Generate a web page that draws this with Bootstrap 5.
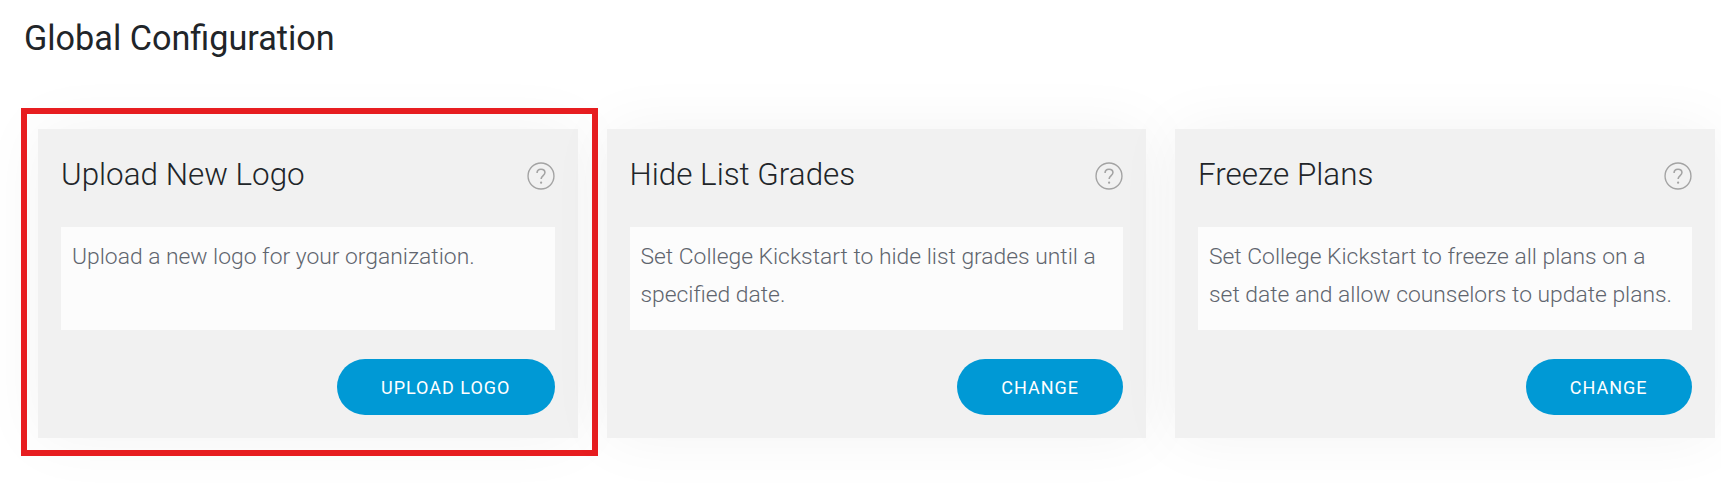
<!DOCTYPE html>
<html lang="en">
<head>
<meta charset="utf-8">
<title>Global Configuration</title>
<link href="https://cdn.jsdelivr.net/npm/bootstrap@5.3.0/dist/css/bootstrap.min.css" rel="stylesheet">
<style>
body { font-family: Roboto, "Liberation Sans", sans-serif; background: #fff; min-height: 484px; }
.cfg-page { padding: 18px 6px 46px 38px; }
.cfg-heading { font-family: Roboto, sans-serif; font-size: 34.2px; font-weight: 400; line-height: 40px; color: #212529; margin: 0 0 71px -14px; }
.cfg-cards { gap: 29px; }
.cfg-card { width: 539.5px; height: 309px; background: #f1f1f1; box-shadow: 0 0 60px rgba(0,0,0,.05); padding: 0 23px; position: relative; }
.cfg-head { height: 98px; padding-top: 28px; }
.cfg-title { font-size: 31.4px; font-weight: 300; line-height: 36px; color: #212529; margin: 0; }
.cfg-help { width: 28px; height: 28px; margin-top: 5px; }
.cfg-desc { height: 103px; background: #fcfcfc; padding: 10.5px 11px 0; font-size: 22.85px; font-weight: 300; line-height: 38px; color: #60656e; margin: 0; }
.cfg-foot { margin-top: 29px; }
.cfg-btn { height: 56px; border-radius: 28px; background: #0099d5; border: 0; color: #fff; font-size: 18px; font-weight: 400; letter-spacing: 1px; padding: 0 44px; text-transform: uppercase; }
.cfg-btn:hover { background: #0099d5; color: #fff; }
.cfg-mark { position: absolute; left: -17.5px; right: -20.5px; top: -21px; bottom: -18px; border: 6px solid #e71d20; pointer-events: none; }
</style>
</head>
<body>
<main class="cfg-page">
  <h1 class="cfg-heading">Global Configuration</h1>
  <div class="d-flex cfg-cards">
    <section class="cfg-card">
      <div class="d-flex justify-content-between align-items-start cfg-head">
        <h2 class="cfg-title">Upload New Logo</h2>
        <svg class="cfg-help" viewBox="0 0 27 27" aria-hidden="true"><circle cx="13.5" cy="13.5" r="12.5" fill="none" stroke="#a3a3a3" stroke-width="1.3"/><path d="M9.7 10.6c0-2.3 1.7-3.7 3.8-3.7s3.8 1.3 3.8 3.3c0 2.9-3.7 2.9-3.7 6.3" fill="none" stroke="#a3a3a3" stroke-width="1.5"/><circle cx="13.6" cy="19.9" r="1.1" fill="#a3a3a3"/></svg>
      </div>
      <p class="cfg-desc">Upload a new logo for your organization.</p>
      <div class="d-flex justify-content-end cfg-foot"><button type="button" class="btn cfg-btn">Upload Logo</button></div>
      <div class="cfg-mark"></div>
    </section>
    <section class="cfg-card">
      <div class="d-flex justify-content-between align-items-start cfg-head">
        <h2 class="cfg-title">Hide List Grades</h2>
        <svg class="cfg-help" viewBox="0 0 27 27" aria-hidden="true"><circle cx="13.5" cy="13.5" r="12.5" fill="none" stroke="#a3a3a3" stroke-width="1.3"/><path d="M9.7 10.6c0-2.3 1.7-3.7 3.8-3.7s3.8 1.3 3.8 3.3c0 2.9-3.7 2.9-3.7 6.3" fill="none" stroke="#a3a3a3" stroke-width="1.5"/><circle cx="13.6" cy="19.9" r="1.1" fill="#a3a3a3"/></svg>
      </div>
      <p class="cfg-desc">Set College Kickstart to hide list grades until a specified date.</p>
      <div class="d-flex justify-content-end cfg-foot"><button type="button" class="btn cfg-btn">Change</button></div>
    </section>
    <section class="cfg-card">
      <div class="d-flex justify-content-between align-items-start cfg-head">
        <h2 class="cfg-title">Freeze Plans</h2>
        <svg class="cfg-help" viewBox="0 0 27 27" aria-hidden="true"><circle cx="13.5" cy="13.5" r="12.5" fill="none" stroke="#a3a3a3" stroke-width="1.3"/><path d="M9.7 10.6c0-2.3 1.7-3.7 3.8-3.7s3.8 1.3 3.8 3.3c0 2.9-3.7 2.9-3.7 6.3" fill="none" stroke="#a3a3a3" stroke-width="1.5"/><circle cx="13.6" cy="19.9" r="1.1" fill="#a3a3a3"/></svg>
      </div>
      <p class="cfg-desc">Set College Kickstart to freeze all plans on a set date and allow counselors to update plans.</p>
      <div class="d-flex justify-content-end cfg-foot"><button type="button" class="btn cfg-btn">Change</button></div>
    </section>
  </div>
</main>
<script src="https://cdn.jsdelivr.net/npm/bootstrap@5.3.0/dist/js/bootstrap.bundle.min.js"></script>
</body>
</html>
